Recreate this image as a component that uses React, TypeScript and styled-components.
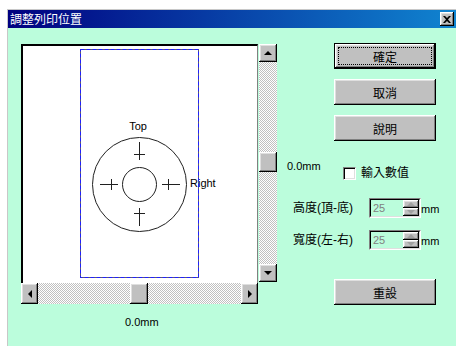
import React from "react";
import styled, { createGlobalStyle, css } from "styled-components";

const MINT = "#bbfddc";
const FACE = "#c0c0c0";
const CJK = `"Noto Sans CJK TC", "Noto Sans CJK SC", sans-serif`;
const LATIN = `"Liberation Sans", "Noto Sans CJK TC", sans-serif`;

const GlobalStyle = createGlobalStyle`
  html, body { margin: 0; padding: 0; background: #fff; overflow: hidden; }
  body { font-family: ${LATIN}; font-size: 12px; color: #000; }
`;

const raised = css`
  background: ${FACE};
  box-shadow: inset -1px -1px #000, inset 1px 1px #fff, inset -2px -2px #808080,
    inset 2px 2px #dfdfdf;
`;

const Window = styled.div`
  margin: 9px 0 0 7px;
  height: 337px;
  border-left: 1px solid #c8c8c8;
  border-top: 1px solid #c8c8c8;
  background: ${MINT};
  display: flex;
  flex-direction: column;
`;

const TitleBar = styled.div`
  height: 18px;
  padding: 0 2px 0 2px;
  display: flex;
  align-items: center;
  justify-content: space-between;
  background: linear-gradient(to right, #000080, #1084d0);
`;

const Title = styled.span`
  font-family: ${CJK};
  font-size: 12px;
  line-height: 18px;
  color: #fff;
`;

const CloseButton = styled.div`
  ${raised};
  width: 14px;
  height: 14px;
  display: flex;
  align-items: center;
  justify-content: center;
`;

const Body = styled.div`
  flex: 1;
  display: flex;
  align-items: flex-start;
  padding: 15px 0 0 13px;
`;

const LeftPane = styled.div`
  width: 256px;
  margin-top: 1px;
  display: flex;
  flex-direction: column;
`;

const ViewRow = styled.div`
  display: flex;
  align-items: flex-start;
`;

const Preview = styled.div`
  width: 237px;
  display: flex;
  flex-direction: column;
`;

const View = styled.div`
  height: 239px;
  box-sizing: border-box;
  background: #fff;
  border-top: 2px solid #000;
  border-left: 2px solid #000;
  border-right: 1px solid #808080;
`;

const Canvas = styled.svg`
  display: block;
`;

const Track = styled.div<{ $vertical?: boolean }>`
  flex: 1;
  display: flex;
  flex-direction: ${(p) => (p.$vertical ? "column" : "row")};
  background: repeating-conic-gradient(${FACE} 0 25%, #fff 0 50%) 0 0 / 2px 2px;
`;

const HScroll = styled.div`
  height: 21px;
  display: flex;
`;

const VScroll = styled.div`
  width: 18px;
  height: 238px;
  margin-left: 1px;
  display: flex;
  flex-direction: column;
`;

const ScrollButton = styled.div<{ $w: number; $h: number }>`
  ${raised};
  width: ${(p) => p.$w}px;
  height: ${(p) => p.$h}px;
  flex: none;
  display: flex;
  align-items: center;
  justify-content: center;
`;

const Thumb = styled.div<{ $vertical?: boolean; $offset: number }>`
  ${raised};
  flex: none;
  width: ${(p) => (p.$vertical ? "18px" : "18px")};
  height: ${(p) => (p.$vertical ? "20px" : "21px")};
  margin: ${(p) => (p.$vertical ? `${p.$offset}px 0 0 0` : `0 0 0 ${p.$offset}px`)};
`;

type Dir = "up" | "down" | "left" | "right";

const Arrow = styled.span<{ $dir: Dir; $color?: string }>`
  width: 0;
  height: 0;
  ${({ $dir, $color = "#000" }) => {
    switch ($dir) {
      case "up":
        return css`border-left: 4px solid transparent; border-right: 4px solid transparent; border-bottom: 4px solid ${$color};`;
      case "down":
        return css`border-left: 4px solid transparent; border-right: 4px solid transparent; border-top: 4px solid ${$color};`;
      case "left":
        return css`border-top: 4px solid transparent; border-bottom: 4px solid transparent; border-right: 4px solid ${$color};`;
      default:
        return css`border-top: 4px solid transparent; border-bottom: 4px solid transparent; border-left: 4px solid ${$color};`;
    }
  }}
`;

const Caption = styled.div`
  margin-top: 12px;
  padding-left: 104px;
  font-family: ${LATIN};
  font-size: 11px;
  line-height: 13px;
`;

const RightPane = styled.div`
  margin-left: 9px;
  width: 170px;
  display: flex;
  flex-direction: column;
`;

const ButtonColumn = styled.div`
  margin-left: 48px;
  display: flex;
  flex-direction: column;
  gap: 10px;
`;

const Button = styled.div<{ $default?: boolean }>`
  ${raised};
  box-sizing: border-box;
  width: 102px;
  height: 26px;
  display: flex;
  align-items: center;
  justify-content: center;
  font-family: ${CJK};
  font-size: 12px;
  ${(p) =>
    p.$default &&
    css`
      border: 1px solid #000;
      padding: 3px;
    `}
`;

const FocusLabel = styled.span`
  flex: 1;
  align-self: stretch;
  display: flex;
  align-items: center;
  justify-content: center;
  border: 1px dotted #000;
`;

const OptionRow = styled.div`
  margin-top: 25px;
  display: flex;
  align-items: flex-start;
  height: 14px;
`;

const ValueLabel = styled.span`
  width: 56px;
  padding-left: 1px;
  margin-top: -6px;
  font-family: ${LATIN};
  font-size: 11px;
  line-height: 13px;
`;

const CheckBox = styled.span`
  width: 13px;
  height: 13px;
  margin-top: 1px;
  box-sizing: border-box;
  background: #fff;
  border-top: 1px solid #808080;
  border-left: 1px solid #808080;
  border-right: 1px solid #fff;
  border-bottom: 1px solid #fff;
  box-shadow: inset 1px 1px #000, inset -1px -1px #dfdfdf;
`;

const CheckText = styled.span`
  margin-left: 5px;
  margin-top: -1px;
  font-family: ${CJK};
  font-size: 12px;
  line-height: 14px;
`;

const SpinRow = styled.div<{ $gap: number }>`
  margin-top: ${(p) => p.$gap}px;
  padding-left: 7px;
  display: flex;
  align-items: center;
  height: 20px;
`;

const SpinLabel = styled.span`
  width: 76px;
  font-family: ${LATIN};
  font-size: 12px;
  line-height: 14px;
`;

const SpinBox = styled.div`
  width: 52px;
  height: 20px;
  box-sizing: border-box;
  border-top: 1px solid #808080;
  border-left: 1px solid #808080;
  border-right: 1px solid #fff;
  border-bottom: 1px solid #fff;
  display: flex;
`;

const SpinInner = styled.div`
  flex: 1;
  display: flex;
  border-top: 1px solid #000;
  border-left: 1px solid #000;
  border-right: 1px solid #dfdfdf;
  border-bottom: 1px solid #dfdfdf;
`;

const SpinField = styled.span`
  flex: 1;
  padding-left: 2px;
  font-family: ${LATIN};
  font-size: 11px;
  line-height: 16px;
  color: #808080;
`;

const SpinButtons = styled.div`
  width: 16px;
  display: flex;
  flex-direction: column;
`;

const SpinButton = styled.div`
  ${raised};
  flex: 1;
  display: flex;
  align-items: center;
  justify-content: center;
`;

const Unit = styled.span`
  font-family: ${LATIN};
  font-size: 11px;
  line-height: 13px;
  margin-top: 2px;
`;

const ResetButton = styled(Button)`
  margin: 29px 0 0 48px;
`;

function PreviewDrawing() {
  const ink = "#202020";
  return (
    <Canvas width={234} height={237} viewBox="23 46 234 237">
      <text x={138} y={130} fontFamily="Liberation Sans" fontSize={11} textAnchor="middle" fill="#000">
        Top
      </text>
      <text x={190} y={187} fontFamily="Liberation Sans" fontSize={11} fill="#000">
        Right
      </text>
      <g stroke={ink} fill="none" strokeWidth={1}>
        <circle cx={139.5} cy={184.5} r={47} />
        <circle cx={139.5} cy={184.5} r={17} />
        <line x1={139.5} y1={142} x2={139.5} y2={160} />
        <line x1={134} y1={154.5} x2={145} y2={154.5} />
        <line x1={139.5} y1={208} x2={139.5} y2={226} />
        <line x1={134} y1={213.5} x2={145} y2={213.5} />
        <line x1={100} y1={184.5} x2={118} y2={184.5} />
        <line x1={111.5} y1={179} x2={111.5} y2={190} />
        <line x1={162} y1={184.5} x2={180} y2={184.5} />
        <line x1={168.5} y1={179} x2={168.5} y2={190} />
      </g>
      <rect x={80.5} y={49.5} width={118} height={228} fill="none" stroke="#606060" />
      <rect x={80.5} y={49.5} width={118} height={228} fill="none" stroke="#2020ff" strokeDasharray="4 2" />
    </Canvas>
  );
}

function SpinControl({ label, value }: { label: string; value: string }) {
  return (
    <>
      <SpinLabel>{label}</SpinLabel>
      <SpinBox>
        <SpinInner>
          <SpinField>{value}</SpinField>
          <SpinButtons>
            <SpinButton>
              <Arrow $dir="up" $color="#a0a0a0" />
            </SpinButton>
            <SpinButton>
              <Arrow $dir="down" $color="#a0a0a0" />
            </SpinButton>
          </SpinButtons>
        </SpinInner>
      </SpinBox>
      <Unit>mm</Unit>
    </>
  );
}

export default function App() {
  return (
    <>
      <GlobalStyle />
      <Window>
        <TitleBar>
          <Title>調整列印位置</Title>
          <CloseButton>
            <svg width={8} height={7} viewBox="0 0 8 7">
              <path d="M0 0 L2 0 L4 2 L6 0 L8 0 L5 3.5 L8 7 L6 7 L4 5 L2 7 L0 7 L3 3.5 Z" fill="#000" />
            </svg>
          </CloseButton>
        </TitleBar>
        <Body>
          <LeftPane>
            <ViewRow>
              <Preview>
                <View>
                  <PreviewDrawing />
                </View>
                <HScroll>
                  <ScrollButton $w={17} $h={21}>
                    <Arrow $dir="left" />
                  </ScrollButton>
                  <Track>
                    <Thumb $offset={92} />
                  </Track>
                  <ScrollButton $w={17} $h={21}>
                    <Arrow $dir="right" />
                  </ScrollButton>
                </HScroll>
              </Preview>
              <VScroll>
                <ScrollButton $w={18} $h={18}>
                  <Arrow $dir="up" />
                </ScrollButton>
                <Track $vertical>
                  <Thumb $vertical $offset={90} />
                </Track>
                <ScrollButton $w={18} $h={18}>
                  <Arrow $dir="down" />
                </ScrollButton>
              </VScroll>
            </ViewRow>
            <Caption>0.0mm</Caption>
          </LeftPane>
          <RightPane>
            <ButtonColumn>
              <Button $default>
                <FocusLabel>確定</FocusLabel>
              </Button>
              <Button>取消</Button>
              <Button>說明</Button>
            </ButtonColumn>
            <OptionRow>
              <ValueLabel>0.0mm</ValueLabel>
              <CheckBox />
              <CheckText>輸入數值</CheckText>
            </OptionRow>
            <SpinRow $gap={18}>
              <SpinControl label="高度(頂-底)" value="25" />
            </SpinRow>
            <SpinRow $gap={12}>
              <SpinControl label="寬度(左-右)" value="25" />
            </SpinRow>
            <ResetButton>重設</ResetButton>
          </RightPane>
        </Body>
      </Window>
    </>
  );
}
